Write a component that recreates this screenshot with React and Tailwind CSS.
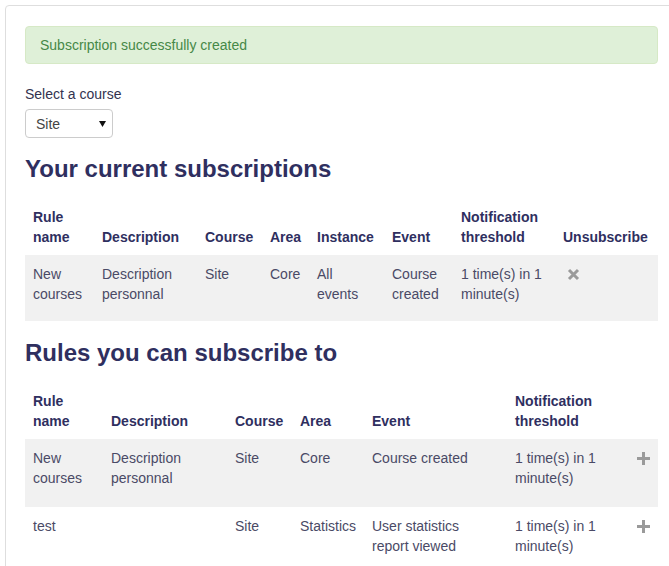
import React from 'react'

const subscriptions = [
    {
        rule: 'New courses',
        description: 'Description personnal',
        course: 'Site',
        area: 'Core',
        instance: 'All events',
        event: 'Course created',
        threshold: '1 time(s) in 1 minute(s)',
    },
]

const rules = [
    {
        rule: 'New courses',
        description: 'Description personnal',
        course: 'Site',
        area: 'Core',
        event: 'Course created',
        threshold: '1 time(s) in 1 minute(s)',
    },
    {
        rule: 'test',
        description: '',
        course: 'Site',
        area: 'Statistics',
        event: 'User statistics report viewed',
        threshold: '1 time(s) in 1 minute(s)',
    },
]

const RemoveIcon = () => (
    <svg width="13" height="13" viewBox="0 0 13 13" className="block">
        <path d="M2 2 L11 11 M11 2 L2 11" stroke="#9a9a9a" strokeWidth="3" fill="none" />
    </svg>
)

const AddIcon = () => (
    <svg width="13" height="13" viewBox="0 0 13 13" className="block">
        <path d="M5 0 H8 V5 H13 V8 H8 V13 H5 V8 H0 V5 H5 Z" fill="#9a9a9a" />
    </svg>
)

const Th = ({ children }) => (
    <th className="px-[8px] pt-[8px] pb-[8px] text-left align-bottom font-bold text-[#2f2f5f]">
        {children}
    </th>
)

const Td = ({ children }) => (
    <td className="px-[8px] pt-[9px] align-top text-[#4a4a66]">{children}</td>
)

const App = () => {
    return (
        <div className="h-[566px] overflow-hidden bg-white pl-[5px] pt-[5px] font-['Liberation_Sans',Arial,sans-serif] text-[14px] leading-[20px]">
            <div className="w-[700px] rounded-[4px] border border-[#dedede] pl-[19px] pt-[20px] pb-[40px]">
                <div className="w-[633px]">
                    {/* alert */}
                    <div className="rounded-[4px] border border-[#d6e9c6] bg-[#dff0d8] py-[8px] pl-[14px] leading-[20px] text-[#468847]">
                        Subscription successfully created
                    </div>

                    <div className="mt-[20px] text-[#333350]">Select a course</div>
                    <div className="mt-[5px] flex h-[29px] w-[88px] items-center justify-between rounded-[4px] border border-[#cccccc] bg-white pl-[10px] pr-[6px] text-[#444]">
                        <span>Site</span>
                        <svg width="7" height="6" viewBox="0 0 7 6">
                            <path d="M0 0 H7 L3.5 6 Z" fill="#111" />
                        </svg>
                    </div>

                    <h3 className="mt-[16px] text-[24px] leading-[30px] font-bold text-[#2f2f5f]">
                        Your current subscriptions
                    </h3>

                    <table className="mt-[15px] w-[633px] table-fixed border-collapse">
                        <colgroup>
                            <col className="w-[69px]" />
                            <col className="w-[103px]" />
                            <col className="w-[65px]" />
                            <col className="w-[47px]" />
                            <col className="w-[75px]" />
                            <col className="w-[69px]" />
                            <col className="w-[102px]" />
                            <col className="w-[103px]" />
                        </colgroup>
                        <thead>
                            <tr>
                                <Th>Rule name</Th>
                                <Th>Description</Th>
                                <Th>Course</Th>
                                <Th>Area</Th>
                                <Th>Instance</Th>
                                <Th>Event</Th>
                                <Th>Notification threshold</Th>
                                <Th>Unsubscribe</Th>
                            </tr>
                        </thead>
                        <tbody>
                            {subscriptions.map((s, i) => (
                                <tr key={i} className="h-[66px] bg-[#f1f1f1]">
                                    <Td>{s.rule}</Td>
                                    <Td>{s.description}</Td>
                                    <Td>{s.course}</Td>
                                    <Td>{s.area}</Td>
                                    <Td>{s.instance}</Td>
                                    <Td>{s.event}</Td>
                                    <Td>{s.threshold}</Td>
                                    <Td>
                                        <div className="ml-[4px] mt-[4px]">
                                            <RemoveIcon />
                                        </div>
                                    </Td>
                                </tr>
                            ))}
                        </tbody>
                    </table>

                    <h3 className="mt-[17px] text-[24px] leading-[30px] font-bold text-[#2f2f5f]">
                        Rules you can subscribe to
                    </h3>

                    <table className="mt-[15px] w-[633px] table-fixed border-collapse">
                        <colgroup>
                            <col className="w-[78px]" />
                            <col className="w-[124px]" />
                            <col className="w-[65px]" />
                            <col className="w-[72px]" />
                            <col className="w-[143px]" />
                            <col className="w-[122px]" />
                            <col className="w-[29px]" />
                        </colgroup>
                        <thead>
                            <tr>
                                <Th>Rule name</Th>
                                <Th>Description</Th>
                                <Th>Course</Th>
                                <Th>Area</Th>
                                <Th>Event</Th>
                                <Th>Notification threshold</Th>
                                <Th></Th>
                            </tr>
                        </thead>
                        <tbody>
                            {rules.map((r, i) => (
                                <tr key={i} className={i % 2 === 0 ? 'h-[68px] bg-[#f1f1f1]' : 'h-[68px]'}>
                                    <Td>{r.rule}</Td>
                                    <Td>{r.description}</Td>
                                    <Td>{r.course}</Td>
                                    <Td>{r.area}</Td>
                                    <Td>{r.event}</Td>
                                    <Td>{r.threshold}</Td>
                                    <Td>
                                        <div className="mt-[4px]">
                                            <AddIcon />
                                        </div>
                                    </Td>
                                </tr>
                            ))}
                        </tbody>
                    </table>
                </div>
            </div>
        </div>
    )
}

export default App
